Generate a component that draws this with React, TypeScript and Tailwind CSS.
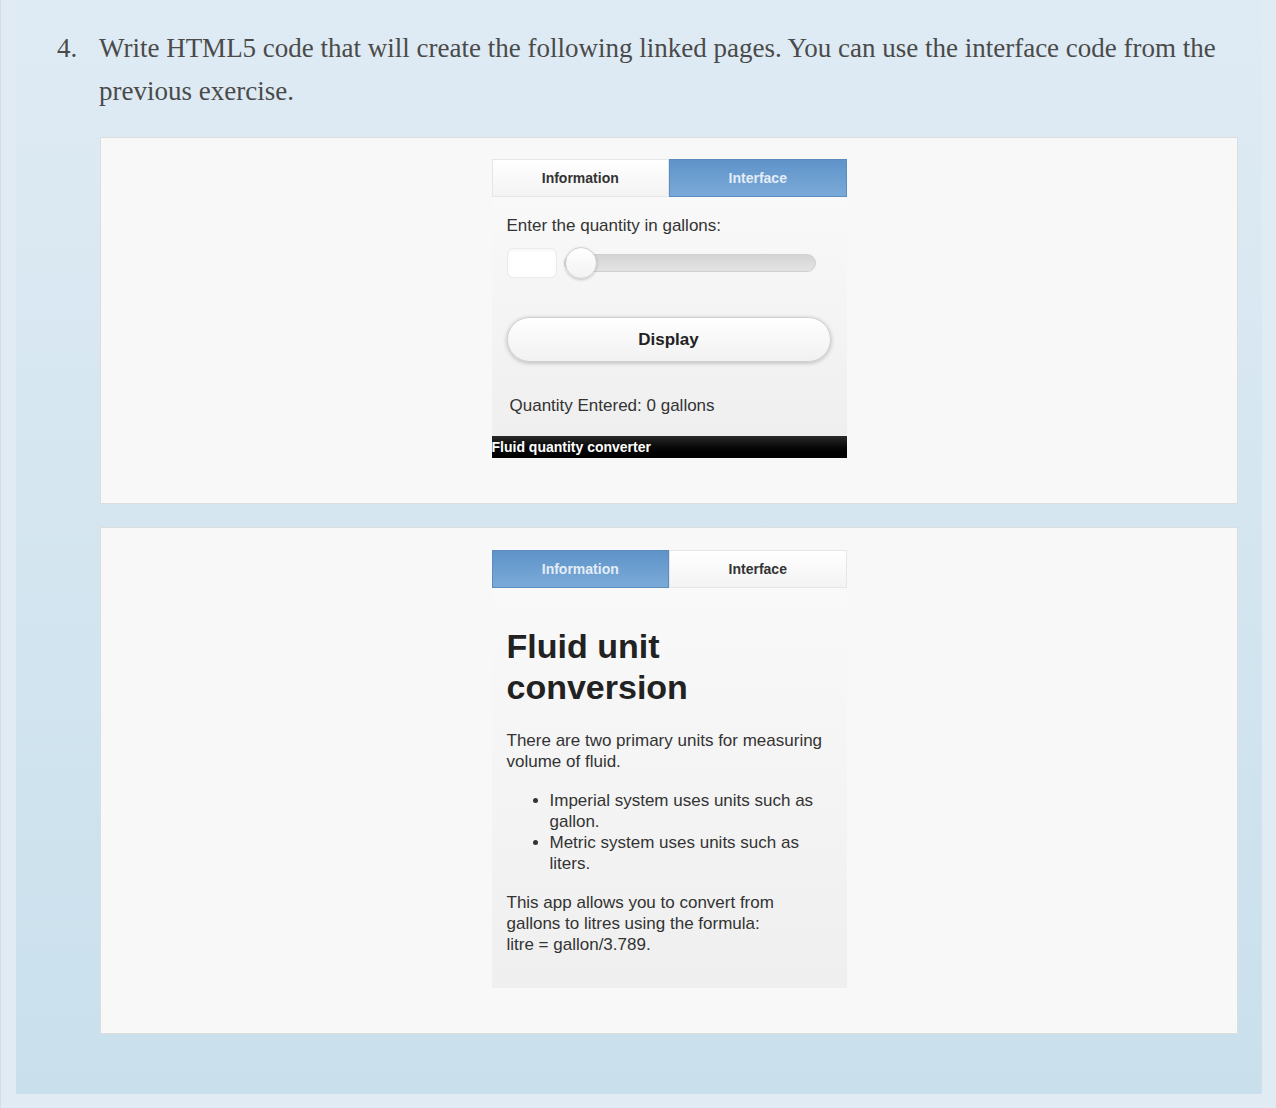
import React from "react";

const sans = { fontFamily: '"Liberation Sans", Arial, sans-serif' };

function Tabs({ active }: { active: "info" | "iface" }) {
  const on =
    "flex-1 flex items-center justify-center bg-gradient-to-b from-[#5f93c9] to-[#7aaad8] text-[#e4edf7] border border-[#5a8cc0]";
  const off =
    "flex-1 flex items-center justify-center bg-gradient-to-b from-white to-[#f3f3f3] text-[#333] border border-[#e6e6e6]";
  return (
    <div className="flex h-[38px] text-[14px] font-bold" style={sans}>
      <div className={active === "info" ? on : off}>Information</div>
      <div className={active === "iface" ? on : off}>Interface</div>
    </div>
  );
}

function Card({ children, h }: { children: React.ReactNode; h: string }) {
  return (
    <div className={`ml-[84px] mr-[24px] bg-[#f8f8f8] border border-[#dddddd] flex justify-center ${h}`}>
      {children}
    </div>
  );
}

export default function App() {
  return (
    <div className="w-[1276px] h-[1108px] bg-[#e1ebf3] border-l border-[#d3dee8] pl-[15px] pr-[14px] pb-[14px]">
      <div className="h-full bg-gradient-to-b from-[#dfebf4] to-[#c9e0ec] pt-[27px]">
        <div
          className="flex text-[27px] leading-[43px] text-[#4a4a4a]"
          style={{ fontFamily: '"Liberation Serif", "Times New Roman", serif' }}
        >
          <div className="w-[83px] pl-[41px]">4.</div>
          <div className="flex-1 pr-[20px]">
            Write HTML5 code that will create the following linked pages. You can use the interface code from the previous exercise.
          </div>
        </div>

        <div className="mt-[24px]">
          <Card h="h-[367px]">
            <div className="mt-[21px] w-[355px] h-[299px] flex flex-col" style={sans}>
              <Tabs active="iface" />
              <div className="flex-1 bg-gradient-to-b from-[#f9f9f9] to-[#efefef] px-[15px] text-[#333]">
                <div className="text-[17px] mt-[19px] leading-[20px]">Enter the quantity in gallons:</div>
                <div className="flex items-center mt-[12px] h-[30px]">
                  <div className="w-[50px] h-[30px] rounded-[6px] bg-white border border-[#ececec] shadow-[inset_0_1px_3px_rgba(0,0,0,0.06)]" />
                  <div className="relative ml-[7px] w-[252px] h-[18px] rounded-full bg-gradient-to-b from-[#d4d4d4] to-[#e4e4e4] border border-[#d0d0d0]">
                    <div className="absolute left-[0px] top-[-8px] w-[32px] h-[32px] rounded-full bg-gradient-to-b from-white to-[#f2f2f2] border border-[#cfcfcf] shadow-[0_1px_3px_rgba(0,0,0,0.2)]" />
                  </div>
                </div>
                <div className="mt-[39px] w-[324px] h-[45px] rounded-full bg-gradient-to-b from-white to-[#f1f1f1] border border-[#cfcfcf] shadow-[0_1px_4px_rgba(0,0,0,0.25)] flex items-center justify-center text-[17px] font-bold text-[#222]">
                  Display
                </div>
                <div className="mt-[34px] ml-[3px] text-[17px] leading-[20px] text-[#333]">Quantity Entered: 0 gallons</div>
              </div>
              <div className="h-[22px] bg-gradient-to-b from-[#2a2a2a] to-[#000] text-white text-[14px] font-bold leading-[22px]">
                Fluid quantity converter
              </div>
            </div>
          </Card>
        </div>

        <div className="mt-[23px]">
          <Card h="h-[507px]">
            <div className="mt-[22px] w-[355px] h-[438px] flex flex-col" style={sans}>
              <Tabs active="info" />
              <div className="flex-1 bg-gradient-to-b from-[#f9f9f9] to-[#efefef] px-[15px] text-[#333]">
                <h1 className="mt-[38px] text-[34px] leading-[41px] font-bold text-[#222]">
                  Fluid unit
                  <br />
                  conversion
                </h1>
                <p className="mt-[22px] text-[17px] leading-[21px]">
                  There are two primary units for measuring volume of fluid.
                </p>
                <ul className="mt-[18px] pl-[43px] list-disc text-[17px] leading-[21px]">
                  <li>Imperial system uses units such as gallon.</li>
                  <li>Metric system uses units such as liters.</li>
                </ul>
                <p className="mt-[18px] text-[17px] leading-[21px]">
                  This app allows you to convert from gallons to litres using the formula:
                  <br />
                  litre = gallon/3.789.
                </p>
              </div>
            </div>
          </Card>
        </div>
      </div>
    </div>
  );
}
